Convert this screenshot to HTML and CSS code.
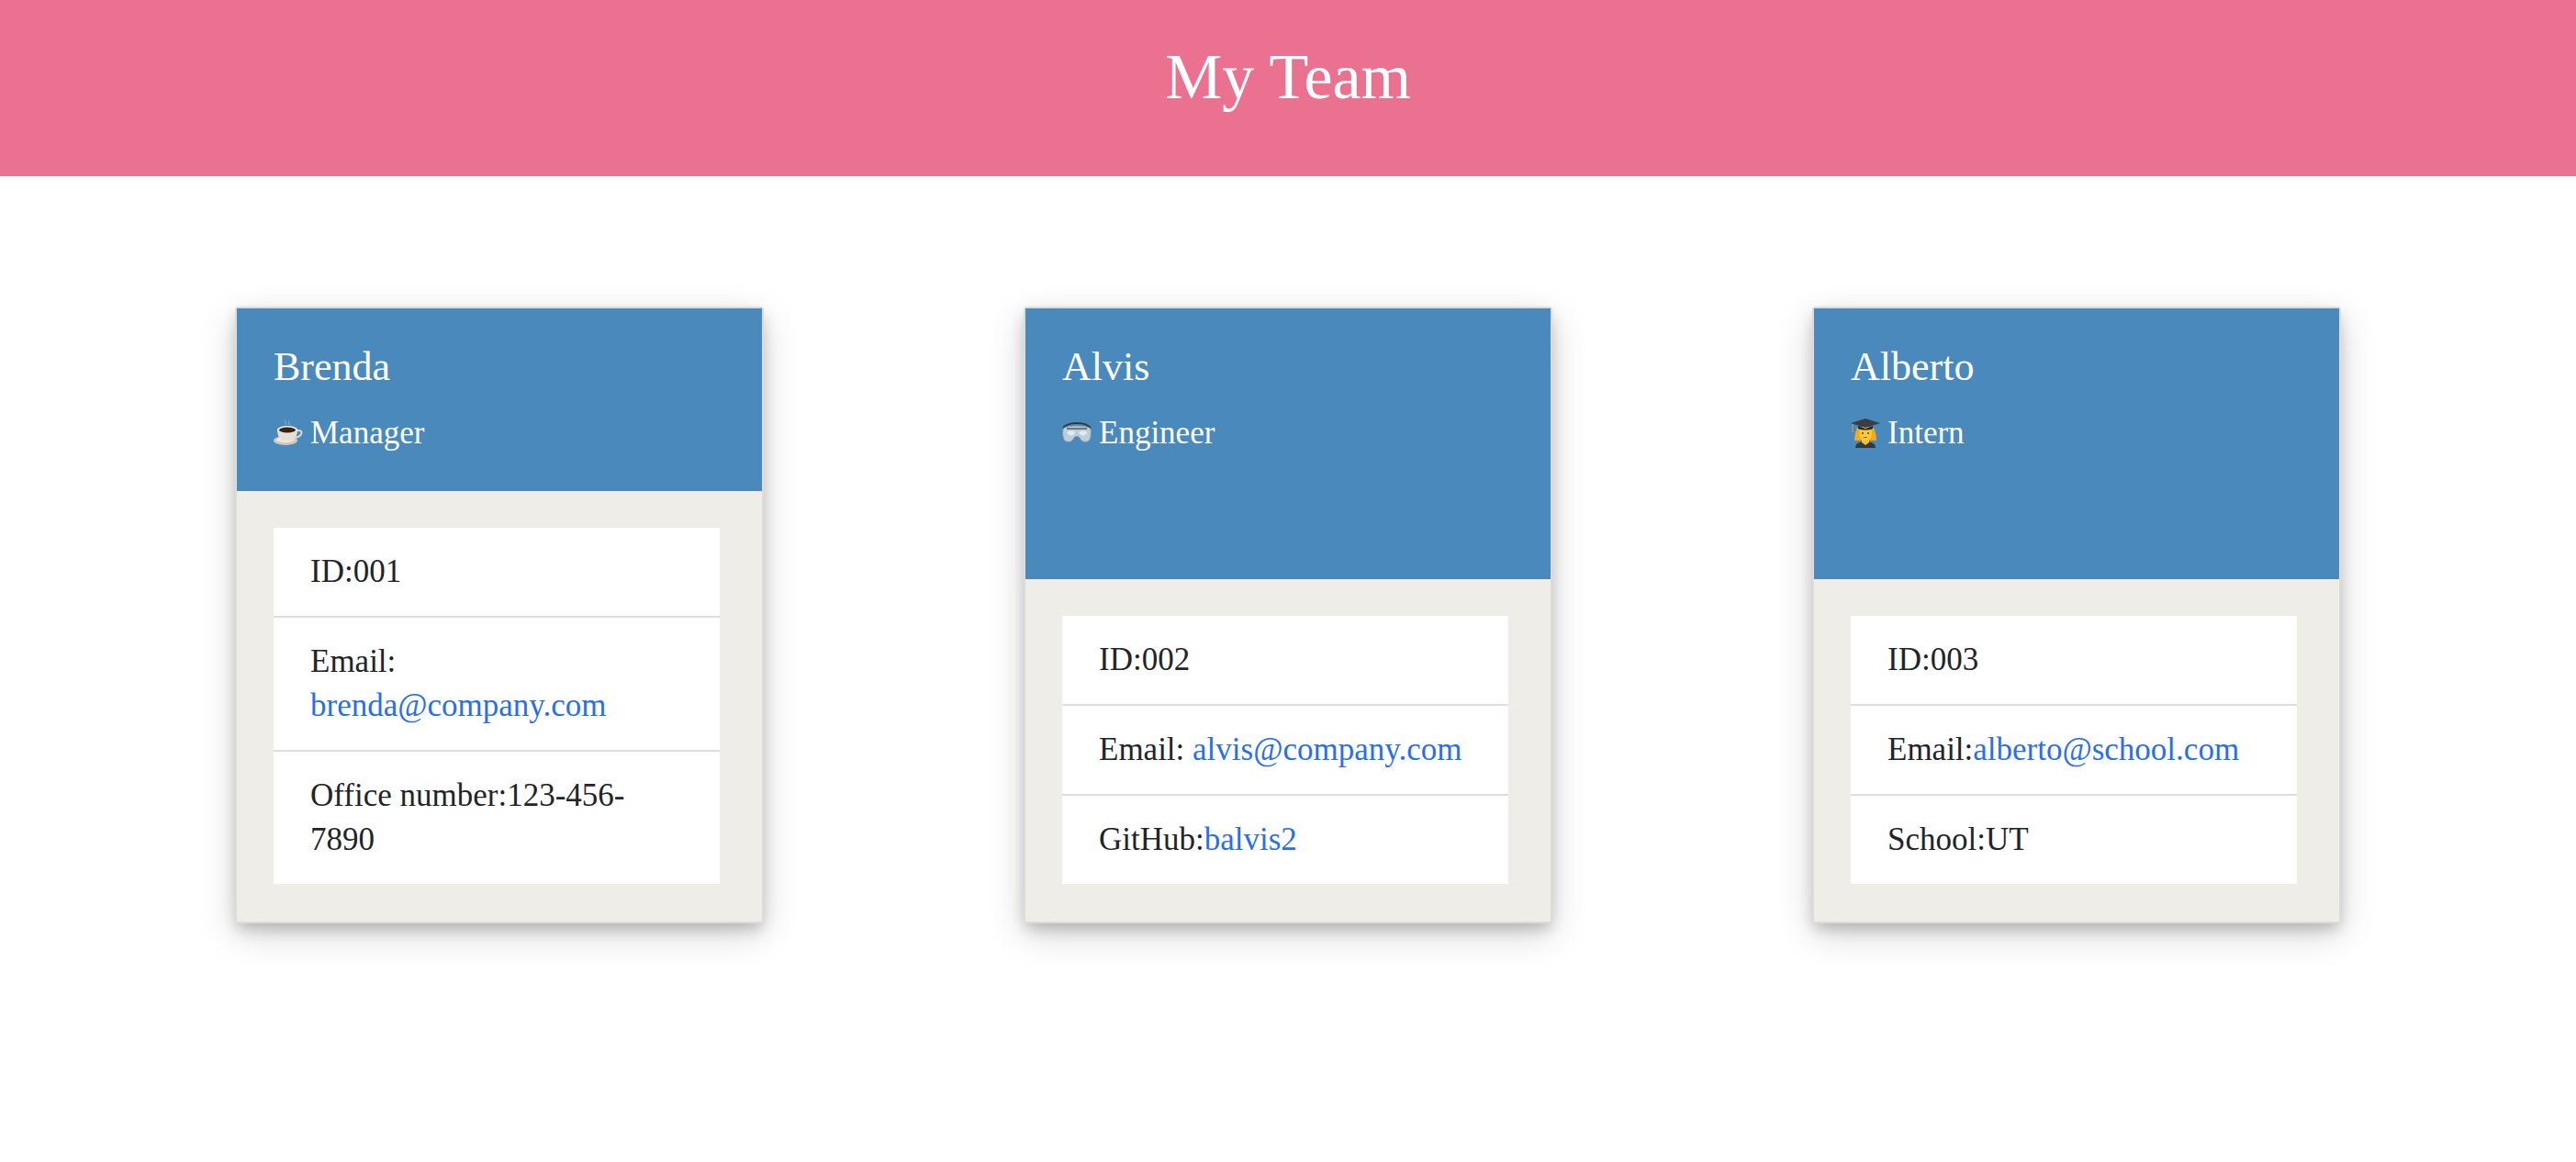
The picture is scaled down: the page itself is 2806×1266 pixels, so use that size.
FILE: index.html
```html
<!DOCTYPE html>
<html lang="en">
<head>
    <meta charset="UTF-8">
    <meta name="viewport" content="width=device-width, initial-scale=1.0">
    <title>My Team</title>
    <link rel="stylesheet" href="styles.css">
</head>
<body>
    <header class="banner">
        <h1>My Team</h1>
    </header>
    <main class="team">
        <div class="col">
            <div class="card">
                <div class="card-head">
                    <h2>Brenda</h2>
                    <h3>
                        <svg class="emoji" viewBox="0 0 32 32">
                            <path d="M13 1c-2 2 2 3 0 6M17 2c-1.500 2 1 3 0 5" fill="none" stroke="#8fb4d2" stroke-width="1"/>
                            <ellipse cx="13" cy="24" rx="13" ry="5" fill="#cfcabc"/>
                            <ellipse cx="13" cy="23" rx="10" ry="3" fill="#eeeae0"/>
                            <path d="M4 12h22c0 6-3 12-6 12H10c-3 0-6-6-6-12z" fill="#e4e0d6"/>
                            <path d="M25 13h3c4 0 4 7-6 8" fill="none" stroke="#dcd8cc" stroke-width="2"/>
                            <ellipse cx="15" cy="12" rx="11" ry="4" fill="#f1ede3"/>
                            <ellipse cx="15" cy="12.500" rx="9" ry="3" fill="#3a2116"/>
                        </svg>
                        Manager
                    </h3>
                </div>
                <div class="card-body">
                    <ul class="list">
                        <li>ID:001</li>
                        <li>Email: <a href="#">brenda@company.com</a></li>
                        <li>Office number:123-456-7890</li>
                    </ul>
                </div>
            </div>
        </div>
        <div class="col">
            <div class="card">
                <div class="card-head">
                    <h2>Alvis</h2>
                    <h3>
                        <svg class="emoji" viewBox="0 0 32 32">
                            <path d="M1 11C5 3 27 3 31 11" fill="none" stroke="#33363b" stroke-width="2"/>
                            <path d="M1 11c3-4 27-4 30 0 1 6 0 13-3 14-5 1-7 0-9-4-1-2-5-2-6 0-2 4-4 5-9 4-3-1-4-8-3-14z" fill="#b9cfdc" stroke="#87939b" stroke-width="1"/>
                            <path d="M5 10h22v2H5z" fill="#6d7880"/>
                            <path d="M5 15c3-2 8-2 9 0-1 4-7 5-9 0zM18 15c3-2 8-2 9 0-1 4-7 5-9 0z" fill="#e2edf3"/>
                        </svg>
                        Engineer
                    </h3>
                </div>
                <div class="card-body">
                    <ul class="list">
                        <li>ID:002</li>
                        <li>Email: <a href="#">alvis@company.com</a></li>
                        <li>GitHub:<a href="#">balvis2</a></li>
                    </ul>
                </div>
            </div>
        </div>
        <div class="col">
            <div class="card">
                <div class="card-head">
                    <h2>Alberto</h2>
                    <h3>
                        <svg class="emoji" viewBox="0 0 32 32">
                            <path d="M7 10h18c2 4 3 10 3 14H4c0-4 1-10 3-14z" fill="#f4a81e"/>
                            <path d="M5 32c0-5 5-7 11-7s11 2 11 7z" fill="#35383d"/>
                            <path d="M12 22h8v4l-4 3-4-3z" fill="#f6c02c"/>
                            <ellipse cx="16" cy="16" rx="7" ry="8" fill="#fbc93a"/>
                            <circle cx="13" cy="16" r="1" fill="#5b3a12"/>
                            <circle cx="19" cy="16" r="1" fill="#5b3a12"/>
                            <path d="M14 20.500h4" stroke="#b5651d" stroke-width="1"/>
                            <path d="M0 5l16-5 16 5-16 5z" fill="#3a3d42"/>
                            <path d="M8 8v3c5 2 11 2 16 0V8l-8 3z" fill="#26282c"/>
                            <path d="M2 6v9" stroke="#e0a020" stroke-width="1"/>
                        </svg>
                        Intern
                    </h3>
                </div>
                <div class="card-body">
                    <ul class="list">
                        <li>ID:003</li>
                        <li>Email:<a href="#">alberto@school.com</a></li>
                        <li>School:UT</li>
                    </ul>
                </div>
            </div>
        </div>
    </main>
</body>
</html>
```

FILE: styles.css
```css
body {
    margin: 0;
    font-family: "Liberation Serif", "DejaVu Serif", serif;
    font-size: 35px;
    line-height: 48px;
    color: #212529;
    background: #fff;
}
.banner {
    height: 192px;
    background: #ea7290;
    color: #fff;
    text-align: center;
}
.banner h1 {
    margin: 0;
    padding-top: 46px;
    font-size: 70px;
    font-weight: 400;
    line-height: 76px;
}
.team {
    display: grid;
    grid-template-columns: repeat(3, 859px);
    justify-content: center;
    padding: 144px 0 262px;
}
.col {
    display: flex;
    justify-content: center;
}
.card {
    display: flex;
    flex-direction: column;
    width: 572px;
    height: 668px;
    box-shadow: 0 0 0 2px #dcdcd9, 0 8px 16px rgba(0, 0, 0, 0.2), 0 12px 40px rgba(0, 0, 0, 0.19);
    border-radius: 2px;
}
.card-head {
    flex: 1;
    padding: 40px;
    background: #4a89bc;
    color: #fff;
}
.card-head h2 {
    margin: 0 0 28px;
    font-size: 44px;
    font-weight: 400;
    line-height: 48px;
}
.card-head h3 {
    display: flex;
    align-items: center;
    gap: 8px;
    margin: 0;
    font-size: 35px;
    font-weight: 400;
    line-height: 39px;
}
.emoji {
    width: 32px;
    height: 32px;
}
.card-body {
    padding: 40px 46px 41px 40px;
    background: #eeede8;
}
.list {
    margin: 0;
    padding: 0;
    list-style: none;
    background: #fff;
}
.list li {
    padding: 24px 40px;
    border-bottom: 2px solid #ddd;
}
.list li:last-child {
    border-bottom: 0;
}
a {
    color: #2a6fe8;
    text-decoration: none;
}
```
